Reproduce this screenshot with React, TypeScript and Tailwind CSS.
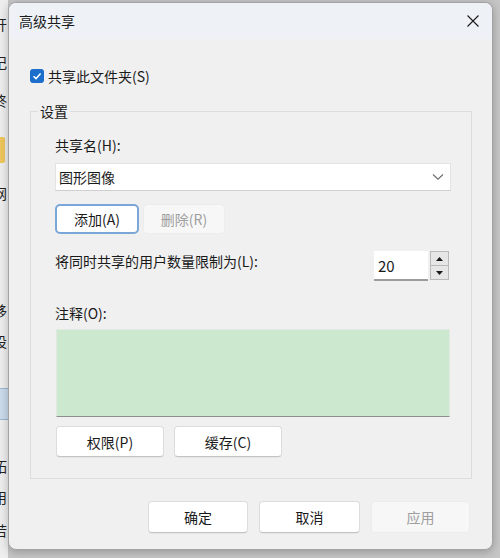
import React from "react";

const font = "font-['Noto_Sans_CJK_SC','Noto_Sans',sans-serif]";

type StripRow = { h: number; t?: string; kind?: "folder" | "band" };

const stripRows: StripRow[] = [
  { h: 12 },
  { h: 24, t: "开" },
  { h: 14 },
  { h: 24, t: "记" },
  { h: 14 },
  { h: 24, t: "终" },
  { h: 25 },
  { h: 26, kind: "folder" },
  { h: 18 },
  { h: 24, t: "网" },
  { h: 2 },
  { h: 24, t: "\\" },
  { h: 67 },
  { h: 24, t: "移" },
  { h: 7 },
  { h: 24, t: "设" },
  { h: 35 },
  { h: 32, kind: "band" },
  { h: 34 },
  { h: 24, t: "拓" },
  { h: 7 },
  { h: 24, t: "用" },
  { h: 9 },
  { h: 24, t: "若" },
];

function BackWindowStrip() {
  return (
    <div className="w-[8px] h-full shrink-0 bg-[#eeeeee] overflow-hidden flex flex-col">
      {stripRows.map((r, i) => {
        if (r.kind === "folder") {
          return (
            <div key={i} style={{ height: r.h }} className="shrink-0 flex">
              <div className="w-[5px] h-full bg-[#eec65c] rounded-r-[2px]" />
            </div>
          );
        }
        if (r.kind === "band") {
          return (
            <div
              key={i}
              style={{ height: r.h }}
              className="shrink-0 bg-[#cbdcec] border-y border-[#9db8d6]"
            />
          );
        }
        return (
          <div
            key={i}
            style={{ height: r.h }}
            className="shrink-0 flex items-center text-[14px] leading-none text-[#222] whitespace-nowrap"
          >
            {r.t && <span className="-ml-[7px]">{r.t}</span>}
          </div>
        );
      })}
    </div>
  );
}

function Btn({
  children,
  w,
  h = 31,
  primary = false,
  disabled = false,
}: {
  children: React.ReactNode;
  w: number;
  h?: number;
  primary?: boolean;
  disabled?: boolean;
}) {
  let cls =
    "flex items-center justify-center rounded-[4px] text-[14px] leading-none shrink-0 ";
  if (disabled) {
    cls += "bg-[#f7f7f7] border border-[#ececec] text-[#9e9e9e]";
  } else if (primary) {
    cls += "bg-white border-2 border-[#7aa6d8] rounded-[5px] text-[#1a1a1a]";
  } else {
    cls +=
      "bg-white border border-[#dcdcdc] border-b-[#c4c4c4] text-[#1a1a1a] shadow-[0_1px_0_rgba(0,0,0,0.04)]";
  }
  return (
    <div className={cls} style={{ width: w, height: h }}>
      {children}
    </div>
  );
}

export default function App() {
  return (
    <div className={`w-[500px] h-[558px] bg-[#c6c6c6] flex overflow-hidden ${font}`}>
      <BackWindowStrip />

      <div className="mt-[2px] w-[485px] h-[548px] shrink-0 rounded-[8px] border border-[#a3a3a3] bg-[#f0f0f0] shadow-[0_2px_10px_rgba(0,0,0,0.25)] flex flex-col overflow-hidden text-[#1a1a1a]">
        {/* title bar */}
        <div className="h-[36px] shrink-0 bg-[#eef2f7] flex items-center justify-between pl-[10px] pr-[13px]">
          <span className="text-[14px] leading-none">高级共享</span>
          <svg width="12" height="12" viewBox="0 0 12 12" className="text-[#1a1a1a]">
            <path d="M0.5 0.5 L11.5 11.5 M11.5 0.5 L0.5 11.5" stroke="currentColor" strokeWidth="1.1" />
          </svg>
        </div>

        <div className="flex flex-col px-[21px] pt-[30px]">
          {/* share checkbox */}
          <div className="flex items-center gap-[4px] h-[14px]">
            <div className="w-[14px] h-[14px] rounded-[3px] bg-[#1b6ecb] flex items-center justify-center">
              <svg width="10" height="10" viewBox="0 0 10 10">
                <path d="M1.5 5.2 L4 7.6 L8.6 2.4" fill="none" stroke="white" strokeWidth="1.5" />
              </svg>
            </div>
            <span className="text-[14px] leading-none">共享此文件夹(S)</span>
          </div>

          {/* settings group */}
          <fieldset className="mt-[18px] w-[442px] border border-[#dddddd] pl-[24px] pr-[20px] pb-[21px]">
            <legend className="-ml-[17px] px-[2px] text-[14px] leading-[20px]">设置</legend>

            <div className="mt-[14px] text-[14px] leading-[20px]">共享名(H):</div>

            <div className="mt-[8px] w-[396px] h-[28px] bg-white border border-[#e3e3e3] border-b-[#cfcfcf] flex items-center justify-between pl-[3px] pr-[6px]">
              <span className="text-[14px] leading-none">图形图像</span>
              <svg width="12" height="8" viewBox="0 0 12 8">
                <path d="M1 1.5 L6 6.2 L11 1.5" fill="none" stroke="#6b6b6b" strokeWidth="1.1" />
              </svg>
            </div>

            <div className="mt-[13px] flex gap-[4px]">
              <Btn w={84} h={30} primary>
                添加(A)
              </Btn>
              <Btn w={82} h={30} disabled>
                删除(R)
              </Btn>
            </div>

            <div className="mt-[17px] flex items-start justify-between w-[396px]">
              <span className="text-[14px] leading-[20px]">将同时共享的用户数量限制为(L):</span>
              <div className="flex items-start gap-[2px] mr-[2px]">
                <div className="w-[54px] h-[30px] bg-white border-b-2 border-[#9c9c9c] flex items-center pl-[4px]">
                  <span className="text-[15px] leading-none">20</span>
                </div>
                <div className="w-[19px] h-[29px] flex flex-col border border-[#b9b9b9] bg-[#e6e6e6]">
                  <div className="flex-1 flex items-center justify-center border-b border-[#b9b9b9]">
                    <svg width="7" height="4" viewBox="0 0 7 4">
                      <path d="M0 4 L3.5 0 L7 4 Z" fill="#1a1a1a" />
                    </svg>
                  </div>
                  <div className="flex-1 flex items-center justify-center">
                    <svg width="7" height="4" viewBox="0 0 7 4">
                      <path d="M0 0 L3.5 4 L7 0 Z" fill="#1a1a1a" />
                    </svg>
                  </div>
                </div>
              </div>
            </div>

            <div className="mt-[22px] text-[14px] leading-[20px]">注释(O):</div>

            <div className="mt-[6px] ml-[1px] w-[394px] h-[88px] bg-[#cce8cf] border border-[#e2e8e2] border-b-[#8e8e8e]" />

            <div className="mt-[9px] ml-[1px] flex gap-[10px]">
              <Btn w={108} h={31}>
                权限(P)
              </Btn>
              <Btn w={108} h={31}>
                缓存(C)
              </Btn>
            </div>
          </fieldset>

          {/* bottom buttons */}
          <div className="mt-[22px] flex justify-end gap-[11px] pr-[1px]">
            <Btn w={100} h={32}>
              确定
            </Btn>
            <Btn w={101} h={32}>
              取消
            </Btn>
            <Btn w={99} h={32} disabled>
              应用
            </Btn>
          </div>
        </div>
      </div>
    </div>
  );
}
